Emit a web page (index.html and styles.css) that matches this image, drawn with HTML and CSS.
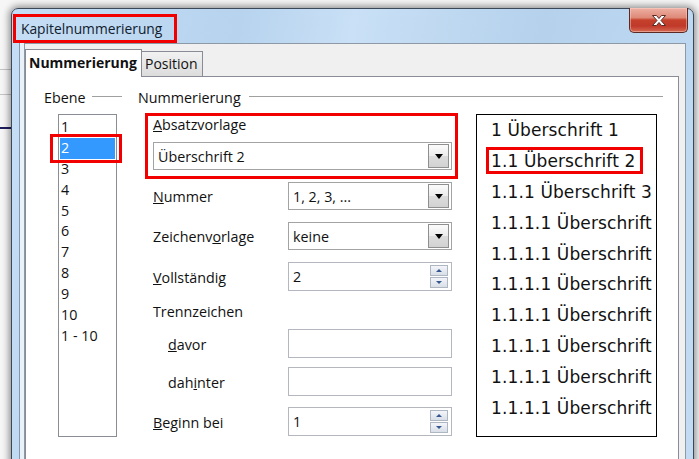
FILE: index.html
```html
<!DOCTYPE html>
<html lang="de">
<head>
<meta charset="utf-8">
<title>Kapitelnummerierung</title>
<link rel="stylesheet" href="styles.css">
</head>
<body>
<div class="desk">
  <div class="window">
    <div class="titlebar">
      <div class="title">Kapitelnummerierung</div>
      <div class="close">
        <svg width="16" height="13" viewBox="0 0 16 13">
          <path d="M1.5 1.5h4l2.5 3 2.5-3h4l-4.5 5 4.5 5h-4l-2.5-3-2.5 3h-4l4.5-5z" fill="#ffffff" stroke="#5a2b25" stroke-width="1" stroke-linejoin="round"/>
        </svg>
      </div>
    </div>
    <div class="client">
      <div class="tabs">
        <div class="tab active">Nummerierung</div>
        <div class="tab">Position</div>
      </div>
      <div class="panel">
        <div class="col-level">
          <div class="legend"><span>Ebene</span><i class="rule"></i></div>
          <ul class="levels">
            <li>1</li>
            <li class="sel">2<span class="mark mark-level"></span></li>
            <li>3</li>
            <li>4</li>
            <li>5</li>
            <li>6</li>
            <li>7</li>
            <li>8</li>
            <li>9</li>
            <li>10</li>
            <li>1 - 10</li>
          </ul>
        </div>
        <div class="col-num">
          <div class="legend"><span>Nummerierung</span><i class="rule"></i></div>
          <div class="num-body">
            <div class="form">
              <div class="para-box">
                <div class="lbl"><u>A</u>bsatzvorlage</div>
                <div class="combo wide"><span class="val">Überschrift 2</span><span class="btn"><i class="tri"></i></span></div>
              </div>
              <div class="row r-nummer">
                <div class="lbl"><u>N</u>ummer</div>
                <div class="combo"><span class="val">1, 2, 3, ...</span><span class="btn"><i class="tri"></i></span></div>
              </div>
              <div class="row r-zeichen">
                <div class="lbl">Zeichenv<u>o</u>rlage</div>
                <div class="combo"><span class="val">keine</span><span class="btn"><i class="tri"></i></span></div>
              </div>
              <div class="row r-voll">
                <div class="lbl"><u>V</u>ollständig</div>
                <div class="edit"><span class="val">2</span><span class="spin"><span class="up"><i></i></span><span class="down"><i></i></span></span></div>
              </div>
              <div class="group-lbl">Trennzeichen</div>
              <div class="row r-davor">
                <div class="lbl sub"><u>d</u>avor</div>
                <div class="edit"></div>
              </div>
              <div class="row r-dahinter">
                <div class="lbl sub">dah<u>i</u>nter</div>
                <div class="edit"></div>
              </div>
              <div class="row r-beginn">
                <div class="lbl"><u>B</u>eginn bei</div>
                <div class="edit"><span class="val">1</span><span class="spin"><span class="up"><i></i></span><span class="down"><i></i></span></span></div>
              </div>
            </div>
            <div class="preview">
              <div class="pv">1 Überschrift 1</div>
              <div class="pv">1.1 Überschrift 2<span class="mark mark-pv"></span></div>
              <div class="pv">1.1.1 Überschrift 3</div>
              <div class="pv">1.1.1.1 Überschrift</div>
              <div class="pv">1.1.1.1 Überschrift</div>
              <div class="pv">1.1.1.1 Überschrift</div>
              <div class="pv">1.1.1.1 Überschrift</div>
              <div class="pv">1.1.1.1 Überschrift</div>
              <div class="pv">1.1.1.1 Überschrift</div>
              <div class="pv">1.1.1.1 Überschrift</div>
            </div>
          </div>
        </div>
      </div>
    </div>
  </div>
</div>
</body>
</html>
```

FILE: styles.css
```css
* { box-sizing: border-box; }
html, body { margin: 0; padding: 0; }
body {
  font-family: "Open Sans", "Noto Sans", sans-serif;
  font-size: 14.3px;
  color: #111;
}
.desk {
  width: 699px;
  height: 459px;
  overflow: hidden;
  padding: 8px 0 0 11px;
  background:
    linear-gradient(to bottom,
      transparent 69px, #c4c4c4 69px, #c4c4c4 70px, transparent 70px,
      transparent 94px, #c4c4c4 94px, #c4c4c4 95px, transparent 95px,
      transparent 127px, #1d1d5e 127px, #1d1d5e 129px, transparent 129px) 0 0 / 12px 100% no-repeat,
    #f6f6f6;
}
.window {
  width: 683px;
  height: 470px;
  border: 1px solid #3b4858;
  border-radius: 7px 7px 0 0;
  background: linear-gradient(100deg, #c6def5 0%, #b7d3ee 30%, #c9e0f6 45%, #b5d1ec 70%, #c3dcf4 100%);
  box-shadow: 0 0 7px 2px rgba(0,0,0,0.42);
}
.titlebar {
  height: 34px;
  display: flex;
  align-items: flex-start;
}
.title {
  margin: 5px 0 0 1px;
  width: 164px;
  height: 29px;
  border: 3px solid #f20000;
  padding: 0 0 0 5px;
  font-size: 13.8px;
  line-height: 23px;
  color: #10202e;
  white-space: nowrap;
}
.close {
  margin: -1px 5px 0 auto;
  width: 59px;
  height: 25px;
  border: 1px solid #5b2a24;
  border-top: none;
  border-radius: 0 0 5px 5px;
  background: linear-gradient(to bottom, #eeb0a4 0%, #de8a78 40%, #c5412b 50%, #c0392a 75%, #d66a52 100%);
  box-shadow: inset 0 0 0 1px rgba(255,220,210,0.45);
  display: flex;
  align-items: center;
  justify-content: center;
}
.client {
  margin: 0 7px 0 12px;
  height: 440px;
  border: 1px solid #8d99a7;
  border-bottom: none;
  background: #f0f0f0;
  box-shadow: -4px 0 0 #e9f1f9, -5px 0 0 #8296ad;
}
.tabs {
  display: flex;
  align-items: flex-end;
  height: 32px;
  padding-top: 5px;
}
.tab {
  height: 25px;
  border: 1px solid #898c95;
  border-bottom: none;
  padding: 0 4px 0 3px;
  font-size: 14px;
  line-height: 23px;
  background: linear-gradient(to bottom, #f2f2f2, #dcdcdc);
  margin-left: -1px;
  white-space: nowrap;
}
.tab.active {
  margin-left: 0;
  height: 28px;
  margin-bottom: -1px;
  width: 117px;
  background: #fff;
  font-weight: bold;
  font-size: 14px;
  line-height: 26px;
  position: relative;
  z-index: 1;
}
.panel {
  margin-right: 6px;
  height: 400px;
  border: 1px solid #898c95;
  border-bottom: none;
  background: #fff;
  display: flex;
  padding: 12px 14px 0 18px;
}
.legend {
  display: flex;
  height: 18px;
  line-height: 18px;
  white-space: nowrap;
}
.rule {
  flex: 1;
  height: 1px;
  margin: 7px 0 0 6px;
  background: #a0a0a0;
}
.col-level { width: 78px; }
.col-num { width: 525px; margin-left: 16px; }
.col-num .rule { margin-left: 8px; }
.levels {
  list-style: none;
  margin: 7px 0 0 14px;
  padding: 2px 1px 0 1px;
  width: 59px;
  height: 323px;
  border: 1px solid #8a8d94;
  background: #fff;
}
.levels li {
  height: 20.9px;
  line-height: 20.9px;
  padding-left: 1px;
  position: relative;
}
.levels li.sel {
  background: #3399ff;
  color: #fff;
}
.mark {
  position: absolute;
  border: 3px solid #f20000;
}
.mark-level {
  left: -10px;
  top: -4px;
  width: 72px;
  height: 29px;
}
.num-body {
  display: flex;
  margin-top: 6px;
}
.form { width: 320px; }
.para-box {
  margin-left: 7px;
  width: 313px;
  height: 66px;
  border: 3px solid #f20000;
  padding: 0 3px 0 5px;
}
.lbl { line-height: 18px; white-space: nowrap; }
.combo, .edit {
  display: flex;
  align-items: center;
  width: 164px;
  height: 28px;
  border: 1px solid #a3a3a3;
  background: #fff;
  padding: 0 2px 0 4px;
}
.combo.wide { width: 299px; margin-top: 8px; }
.edit { height: 29px; border-color: #b4b7bd; padding-right: 3px; }
.val { flex: 1; white-space: nowrap; }
.btn {
  width: 21px;
  height: 24px;
  border: 1px solid #8f8f8f;
  background: linear-gradient(to bottom, #fbfbfb 0%, #ececec 50%, #dcdcdc 51%, #d2d2d2 100%);
  display: flex;
  align-items: center;
  justify-content: center;
}
.tri {
  width: 0;
  height: 0;
  border-left: 4px solid transparent;
  border-right: 4px solid transparent;
  border-top: 5px solid #000;
}
.spin {
  display: flex;
  flex-direction: column;
  width: 18px;
}
.spin .up, .spin .down {
  height: 11px;
  border: 1px solid #aeb6c2;
  background: linear-gradient(to bottom, #f3f5f9, #d9dfe8);
  display: flex;
  align-items: center;
  justify-content: center;
}
.spin .down { margin-top: 1px; }
.spin .up i {
  border-left: 3px solid transparent;
  border-right: 3px solid transparent;
  border-bottom: 3px solid #35568e;
}
.spin .down i {
  border-left: 3px solid transparent;
  border-right: 3px solid transparent;
  border-top: 3px solid #35568e;
}
.row {
  display: flex;
  align-items: center;
  padding-left: 15px;
}
.row .lbl { width: 135px; padding-top: 2px; }
.row .lbl.sub { padding-left: 15px; }
.r-nummer { margin-top: 3px; }
.r-zeichen { margin-top: 12px; }
.r-voll { margin-top: 12px; }
.group-lbl { margin-top: 12px; padding-left: 15px; line-height: 18px; }
.r-davor { margin-top: 8px; }
.r-dahinter { margin-top: 9px; }
.r-beginn { margin-top: 11px; }
.preview {
  margin: 1px 0 0 18px;
  width: 181px;
  height: 323px;
  border: 1px solid #000;
  background: #fff;
  padding-left: 14px;
  overflow: hidden;
  font-family: "DejaVu Sans", sans-serif;
  font-size: 17px;
  letter-spacing: 0.12px;
  color: #111;
}
.pv {
  height: 30.9px;
  line-height: 30.9px;
  white-space: nowrap;
  position: relative;
}
.mark-pv {
  left: -5px;
  top: 1px;
  width: 157px;
  height: 27px;
}
```
